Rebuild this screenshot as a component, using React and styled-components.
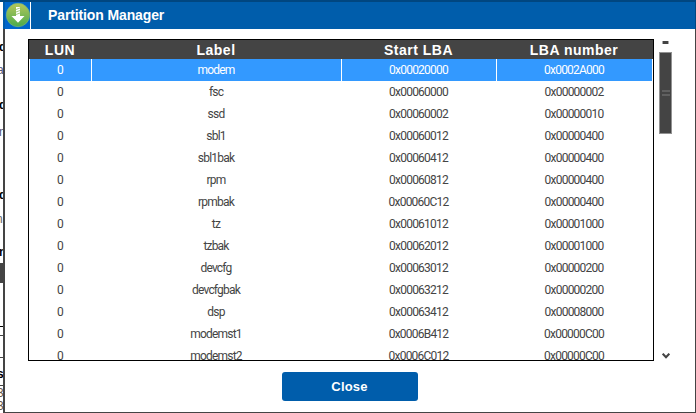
import React from 'react';
import styled, { createGlobalStyle } from 'styled-components';

const Global = createGlobalStyle`
  * { box-sizing: border-box; }
  body { margin: 0; background: #fff; overflow: hidden; }
`;

const Screen = styled.div`
  position: relative;
  display: flex;
  width: 696px;
  height: 413px;
  overflow: hidden;
  font-family: "Liberation Sans", Arial, sans-serif;
`;

const Backdrop = styled.div`
  position: relative;
  flex: 0 0 3px;
  overflow: hidden;
  background: linear-gradient(#004680 2px, #fff 2px);
`;

const Fragment = styled.span`
  position: absolute;
  left: ${p => p.$x ?? -1}px;
  top: ${p => p.$y}px;
  font-size: 12px;
  line-height: 14px;
  font-weight: ${p => (p.$bold ? 700 : 400)};
  color: ${p => p.$color || '#000'};
`;

const Rule = styled.div`
  position: absolute;
  left: 0;
  top: ${p => p.$y}px;
  width: 3px;
  height: ${p => p.$h || 1}px;
  background: ${p => p.$color || '#444'};
`;

const Dialog = styled.div`
  flex: 1;
  display: flex;
  flex-direction: column;
  background: #fff;
  border: solid #444;
  border-width: 0 1px 1px 2px;
`;

const TitleBar = styled.header`
  display: flex;
  flex: 0 0 29px;
  margin: 0 -1px 0 -2px;
  padding-left: 2px;
  background: #005dab;
  border-top: 2px solid #004680;
  border-right: 1px solid #004680;
`;

const IconBox = styled.div`
  width: 26px;
  height: 27px;
  background: #0066cc;
  border-right: 1px solid #fff;
  svg { display: block; }
`;

const Title = styled.h1`
  margin: 0 0 0 17px;
  color: #fff;
  font-size: 14px;
  line-height: 27px;
  letter-spacing: -0.12px;
`;

const Body = styled.div`
  display: flex;
  padding: 10px 0 0 23px;
`;

const Table = styled.div`
  width: 626px;
  height: 322px;
  border: 1px solid #000;
  overflow: hidden;
`;

const Row = styled.div`
  display: grid;
  grid-template-columns: 62px 250px 155px 156px;
  height: 22px;
  padding-left: 1px;
`;

const HeadRow = styled(Row)`
  height: 19px;
  padding-left: 0;
  background: #444;
`;

const HeadCell = styled.div`
  display: flex;
  justify-content: center;
  color: #fff;
  font-size: 14px;
  font-weight: 700;
  line-height: 21px;
  letter-spacing: 0.5px;
`;

const Cell = styled.div`
  display: flex;
  justify-content: center;
  border: solid #fff;
  border-width: 0 1px 1px 0;
  padding-right: 1px;
  background: ${p => (p.$selected ? '#3399ff' : '#fff')};
  color: ${p => (p.$selected ? '#fff' : '#444')};
  font-family: Roboto, "Liberation Sans", sans-serif;
  font-size: 12px;
  line-height: 22px;
  letter-spacing: ${p => (p.$hex ? '-0.78px' : '-0.8px')};
`;

const ScrollBar = styled.div`
  display: flex;
  flex-direction: column;
  align-items: center;
  width: 13px;
  height: 322px;
  margin-left: 5px;
`;

const ScrollUp = styled.div`
  width: 7px;
  height: 3px;
  margin: 2px 0 8px;
  background: #444;
  border: solid #aaa;
  border-width: 0 1px;
`;

const Thumb = styled.div`
  display: flex;
  flex-direction: column;
  align-items: center;
  justify-content: center;
  gap: 2px;
  width: 13px;
  height: 82px;
  background: #444;
  border: 1px solid #929292;
`;

const Grip = styled.i`
  width: 8px;
  height: 2px;
  background: #606060;
`;

const ScrollDown = styled.svg`
  margin-top: auto;
  margin-bottom: 2px;
`;

const CloseButton = styled.button`
  align-self: center;
  width: 136px;
  height: 29px;
  margin: 11px 1px 0 0;
  padding: 0;
  border: 0;
  border-radius: 3px;
  background: #005dab;
  color: #fff;
  font: 700 13px/29px "Liberation Sans", Arial, sans-serif;
  letter-spacing: 0.2px;
`;

const rows = [
  ['modem', '0x00020000', '0x0002A000'],
  ['fsc', '0x00060000', '0x00000002'],
  ['ssd', '0x00060002', '0x00000010'],
  ['sbl1', '0x00060012', '0x00000400'],
  ['sbl1bak', '0x00060412', '0x00000400'],
  ['rpm', '0x00060812', '0x00000400'],
  ['rpmbak', '0x00060C12', '0x00000400'],
  ['tz', '0x00061012', '0x00001000'],
  ['tzbak', '0x00062012', '0x00001000'],
  ['devcfg', '0x00063012', '0x00000200'],
  ['devcfgbak', '0x00063212', '0x00000200'],
  ['dsp', '0x00063412', '0x00008000'],
  ['modemst1', '0x0006B412', '0x00000C00'],
  ['modemst2', '0x0006C012', '0x00000C00'],
];

function DownloadIcon() {
  return (
    <svg width="25" height="27" viewBox="0 0 25 27">
      <defs>
        <linearGradient id="disc" x1="0" y1="0" x2="0" y2="1">
          <stop offset="0" stopColor="#b5c75a" />
          <stop offset="1" stopColor="#4bab4c" />
        </linearGradient>
      </defs>
      <circle cx="13" cy="13" r="11.7" fill="url(#disc)" stroke="#79b37b" strokeWidth="0.7" />
      <path d="M11 5h4v9h4.5L13 20.8 6.5 14H11z" fill="#fff" />
      <path d="M11 7.5l4-1.5M11 10l4-1.5M11 12.5l4-1.5" stroke="#8fbd62" strokeWidth="0.8" />
    </svg>
  );
}

export default function App() {
  return (
    <>
      <Global />
      <Screen>
        <Backdrop>
          <Fragment $y={40} $bold>d</Fragment>
          <Fragment $y={63} $x={-3} $color="#555577">a</Fragment>
          <Fragment $y={98} $bold>d</Fragment>
          <Fragment $y={125} $color="#555577">n</Fragment>
          <Fragment $y={188} $bold>d</Fragment>
          <Fragment $y={212} $x={-4} $color="#666">n</Fragment>
          <Fragment $y={245} $bold>n</Fragment>
          <Rule $y={263} $h={20} />
          <Rule $y={326} $color="#000" />
          <Rule $y={335} />
          <Rule $y={357} />
          <Fragment $y={367} $x={-3} $bold>s</Fragment>
          <Rule $y={385} />
          <Fragment $y={386} $x={-3} $color="#665544">3</Fragment>
          <Fragment $y={399} $x={-3} $color="#665544">3</Fragment>
        </Backdrop>
        <Dialog>
          <TitleBar>
            <IconBox><DownloadIcon /></IconBox>
            <Title>Partition Manager</Title>
          </TitleBar>
          <Body>
            <Table>
              <HeadRow>
                {['LUN', 'Label', 'Start LBA', 'LBA number'].map(h => <HeadCell key={h}>{h}</HeadCell>)}
              </HeadRow>
              {rows.map(([label, start, count], i) => (
                <Row key={label}>
                  <Cell $selected={i === 0}>0</Cell>
                  <Cell $selected={i === 0}>{label}</Cell>
                  <Cell $hex $selected={i === 0}>{start}</Cell>
                  <Cell $hex $selected={i === 0}>{count}</Cell>
                </Row>
              ))}
            </Table>
            <ScrollBar>
              <ScrollUp />
              <Thumb><Grip /><Grip /></Thumb>
              <ScrollDown width="8" height="6" viewBox="0 0 8 6">
                <path d="M0.7 0.7L4 4.3 7.3 0.7" fill="none" stroke="#444" strokeWidth="2.1" />
              </ScrollDown>
            </ScrollBar>
          </Body>
          <CloseButton>Close</CloseButton>
        </Dialog>
      </Screen>
    </>
  );
}
